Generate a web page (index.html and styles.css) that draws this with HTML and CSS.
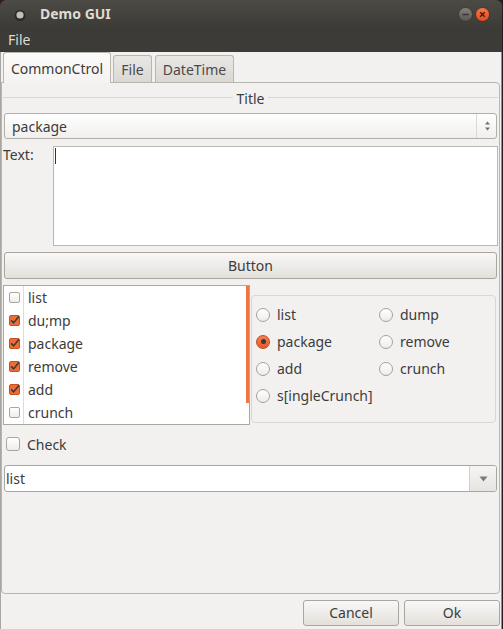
FILE: index.html
```html
<!DOCTYPE html>
<html>
<head>
<meta charset="utf-8">
<title>Demo GUI</title>
<link rel="stylesheet" href="styles.css">
</head>
<body>
<div class="window">
  <div class="titlebar">
    <svg class="app-icon" width="12" height="12" viewBox="0 0 12 12"><circle cx="6" cy="6.5" r="5.5" fill="#2b2a27"/><circle cx="6" cy="6" r="3.6" fill="#c3c0ba"/></svg>
    <span class="title">Demo GUI</span>
    <span class="controls">
      <svg width="15" height="15" viewBox="0 0 15 15"><defs><linearGradient id="gm" x1="0" y1="0" x2="0" y2="1"><stop offset="0" stop-color="#85837e"/><stop offset="1" stop-color="#55534f"/></linearGradient></defs><circle cx="7.5" cy="7.5" r="7" fill="url(#gm)" stroke="#33322f" stroke-width="0.8"/><rect x="4.2" y="6.8" width="6.6" height="1.5" fill="#3a3936"/></svg>
      <svg width="15" height="15" viewBox="0 0 15 15"><defs><linearGradient id="gc" x1="0" y1="0" x2="0" y2="1"><stop offset="0" stop-color="#f57a4a"/><stop offset="1" stop-color="#df4a1e"/></linearGradient></defs><circle cx="7.5" cy="7.5" r="7" fill="url(#gc)" stroke="#3a2a22" stroke-width="0.8"/><path d="M5.2 5.2 L9.8 9.8 M9.8 5.2 L5.2 9.8" stroke="#4a1a0a" stroke-width="1.4"/></svg>
    </span>
  </div>
  <div class="menubar"><span>File</span></div>
  <div class="client">
    <div class="tabs">
      <div class="tab active w-common">CommonCtrol</div>
      <div class="tab w-file">File</div>
      <div class="tab w-date">DateTime</div>
    </div>
    <div class="pane">
      <div class="group-title"><span class="gline"></span><span class="gtext">Title</span><span class="gline"></span></div>
      <div class="combo spin">
        <span class="combo-text">package</span>
        <span class="spin-btn">
          <svg width="7" height="12" viewBox="0 0 7 12"><path d="M3.5 1.5 L6 4.5 L1 4.5 Z" fill="#6e6e6e"/><path d="M3.5 10.5 L6 7.5 L1 7.5 Z" fill="#6e6e6e"/></svg>
        </span>
      </div>
      <div class="text-row">
        <span class="text-label">Text:</span>
        <div class="textarea"><span class="caret"></span></div>
      </div>
      <div class="button">Button</div>
      <div class="lists">
        <div class="listwidget">
          <div class="rows">
            <div class="row"><span class="cell-check"><span class="cb"></span></span><span class="cell-text">list</span></div>
            <div class="row"><span class="cell-check"><svg class="cbx" width="11" height="11" viewBox="0 0 11 11"><rect x="0.5" y="0.5" width="10" height="10" rx="1.5" fill="#ee6c38" stroke="#c6501f"/><path d="M2.2 5.4 L4.6 7.9 L9.8 1.4" fill="none" stroke="#3a3a3a" stroke-width="1.6"/></svg></span><span class="cell-text">du;mp</span></div>
            <div class="row"><span class="cell-check"><svg class="cbx" width="11" height="11" viewBox="0 0 11 11"><rect x="0.5" y="0.5" width="10" height="10" rx="1.5" fill="#ee6c38" stroke="#c6501f"/><path d="M2.2 5.4 L4.6 7.9 L9.8 1.4" fill="none" stroke="#3a3a3a" stroke-width="1.6"/></svg></span><span class="cell-text">package</span></div>
            <div class="row"><span class="cell-check"><svg class="cbx" width="11" height="11" viewBox="0 0 11 11"><rect x="0.5" y="0.5" width="10" height="10" rx="1.5" fill="#ee6c38" stroke="#c6501f"/><path d="M2.2 5.4 L4.6 7.9 L9.8 1.4" fill="none" stroke="#3a3a3a" stroke-width="1.6"/></svg></span><span class="cell-text">remove</span></div>
            <div class="row"><span class="cell-check"><svg class="cbx" width="11" height="11" viewBox="0 0 11 11"><rect x="0.5" y="0.5" width="10" height="10" rx="1.5" fill="#ee6c38" stroke="#c6501f"/><path d="M2.2 5.4 L4.6 7.9 L9.8 1.4" fill="none" stroke="#3a3a3a" stroke-width="1.6"/></svg></span><span class="cell-text">add</span></div>
            <div class="row"><span class="cell-check"><span class="cb"></span></span><span class="cell-text">crunch</span></div>
          </div>
          <div class="scroll"><div class="thumb"></div></div>
        </div>
        <div class="radiogroup">
          <label class="radio"><span class="rb"></span>list</label>
          <label class="radio"><span class="rb"></span>dump</label>
          <label class="radio"><span class="rb on"></span>package</label>
          <label class="radio"><span class="rb"></span>remove</label>
          <label class="radio"><span class="rb"></span>add</label>
          <label class="radio"><span class="rb"></span>crunch</label>
          <label class="radio"><span class="rb"></span>s[ingleCrunch]</label>
        </div>
      </div>
      <div class="check-row"><span class="cb big"></span><span>Check</span></div>
      <div class="combo drop">
        <span class="combo-text">list</span>
        <span class="drop-btn"><svg width="9" height="6" viewBox="0 0 9 6"><path d="M0.5 0.5 L8.5 0.5 L4.5 5.5 Z" fill="#7a7a7a"/></svg></span>
      </div>
    </div>
    <div class="dialog-buttons">
      <div class="dbtn">Cancel</div>
      <div class="dbtn">Ok</div>
    </div>
  </div>
</div>
</body>
</html>
```

FILE: styles.css
```css
* { box-sizing: border-box; margin: 0; padding: 0; }
html, body { width: 503px; height: 629px; overflow: hidden; }
body {
  background: #2e1a26;
  font-family: "Noto Sans", "DejaVu Sans", sans-serif;
  font-size: 14px;
  color: #3c3c3c;
}
.window { width: 502px; height: 629px; display: flex; flex-direction: column; }

.titlebar {
  height: 28px;
  background: linear-gradient(#4b4a45, #3c3b37);
  border-radius: 6px 6px 0 0;
  display: flex;
  align-items: center;
  padding: 0 12px 0 14px;
  color: #dfdbd2;
}
.app-icon { margin-top: 1px; }
.title { margin-left: 14px; font-weight: bold; font-size: 14px; line-height: 16px; }
.controls { margin-left: auto; display: flex; gap: 2px; }

.menubar {
  height: 24px;
  background: #3c3b37;
  color: #dfdbd2;
  padding-left: 8px;
  line-height: 24px;
}

.client {
  flex: 1;
  background: #f2f1f0;
  border-left: 1px solid #a9a6a1;
  border-right: 1px solid #8f8b86;
  display: flex;
  flex-direction: column;
}

.tabs { height: 30px; display: flex; align-items: flex-end; padding-left: 2px; }
.tab {
  height: 27px;
  display: flex;
  align-items: center;
  justify-content: center;
  border: 1px solid #b9b5af;
  border-bottom: none;
  border-radius: 3px 3px 0 0;
  background: linear-gradient(#e9e7e4, #dbd8d4);
  color: #4a4a4a;
}
.tab.active {
  height: 31px;
  margin-bottom: -1px;
  position: relative;
  background: linear-gradient(#fbfbfa, #f4f3f2);
  color: #3c3c3c;
}
.w-common { width: 108px; }
.w-file { width: 39px; margin-left: 2px; }
.w-date { width: 79px; margin-left: 3px; }

.pane {
  width: 499px;
  height: 512px;
  border: 1px solid #b9b5af;
  border-radius: 0 4px 4px 4px;
  padding: 0 1px;
  display: flex;
  flex-direction: column;
}

.group-title { height: 30px; display: flex; align-items: center; padding-bottom: 1px; }
.gline { flex: 1; border-top: 1px solid #d9d6d1; }
.gtext { padding: 3px 4px 0; line-height: 16px; }

.combo {
  margin: 0 1px;
  border: 1px solid #b1ada7;
  border-radius: 3px;
  display: flex;
  align-items: center;
}
.combo.spin { height: 26px; background: linear-gradient(#ffffff, #f0efed); }
.combo.spin .combo-text { padding-left: 7px; flex: 1; }
.spin-btn {
  width: 20px;
  height: 100%;
  border-left: 1px solid #dcd9d5;
  display: flex;
  align-items: center;
  justify-content: center;
  margin: 0;
}
.spin-btn svg { margin-left: 1px; }

.text-row { display: flex; margin-top: 7px; height: 100px; }
.text-label { width: 50px; line-height: 18px; }
.textarea { flex: 1; background: #fff; border: 1px solid #bab7b2; padding: 1px 0 0 1px; }
.caret { display: block; width: 1px; height: 16px; background: #333; }

.button {
  margin: 6px 0 0 1px;
  width: 493px;
  height: 27px;
  border: 1px solid #aaa69f;
  border-radius: 3px;
  background: linear-gradient(#f9f8f7, #e3e0dc);
  text-align: center;
  line-height: 25px;
}

.lists { display: flex; margin-top: 6px; height: 140px; }
.listwidget {
  width: 247px;
  height: 140px;
  border: 1px solid #aaa8a5;
  background: #fff;
  display: flex;
}
.rows { flex: 1; display: flex; flex-direction: column; }
.row { height: 23px; display: flex; align-items: stretch; }
.cell-check {
  width: 20px;
  border-right: 1px solid #dcdcdc;
  display: flex;
  align-items: center;
  padding-left: 5px;
}
.cell-text { padding-left: 4px; line-height: 23px; }
.cb {
  width: 11px;
  height: 11px;
  border: 1px solid #a9a59f;
  border-radius: 2px;
  background: linear-gradient(#ffffff, #efedeb);
}
.cb.big { width: 14px; height: 14px; border-radius: 3px; }
.scroll { width: 3px; }
.thumb { height: 117px; background: #ee7544; }

.radiogroup {
  margin: 10px 0 0 1px;
  width: 245px;
  height: 128px;
  border: 1px solid #dad7d2;
  border-radius: 4px;
  padding: 5px 0 0 4px;
  display: grid;
  grid-template-columns: 123px 1fr;
  grid-auto-rows: 27px;
}
.radio { display: flex; align-items: center; gap: 7px; }
.rb {
  width: 14px;
  height: 14px;
  border-radius: 50%;
  border: 1px solid #a5a19b;
  background: linear-gradient(#ffffff, #eeece9);
  display: flex;
  align-items: center;
  justify-content: center;
}
.rb.on { background: linear-gradient(#f58150, #e5592a); border-color: #c24c1c; }
.rb.on::after { content: ""; width: 5px; height: 5px; border-radius: 50%; background: #3a3a3a; }

.check-row { display: flex; align-items: center; gap: 7px; margin: 12px 0 0 3px; height: 14px; }

.combo.drop { height: 27px; margin-top: 14px; background: #fff; border-color: #aaa69f; }
.combo.drop .combo-text { padding-left: 1px; flex: 1; }
.drop-btn {
  width: 27px;
  height: 100%;
  border-left: 1px solid #d3d0cb;
  background: linear-gradient(#f6f5f3, #e6e4e1);
  border-radius: 0 2px 2px 0;
  display: flex;
  align-items: center;
  justify-content: center;
}

.dialog-buttons {
  display: flex;
  justify-content: flex-end;
  gap: 5px;
  margin-top: 6px;
  padding-right: 1px;
}
.dbtn {
  width: 96px;
  height: 26px;
  border: 1px solid #aaa69f;
  border-radius: 3px;
  background: linear-gradient(#f9f8f7, #e3e0dc);
  text-align: center;
  line-height: 24px;
}
```
